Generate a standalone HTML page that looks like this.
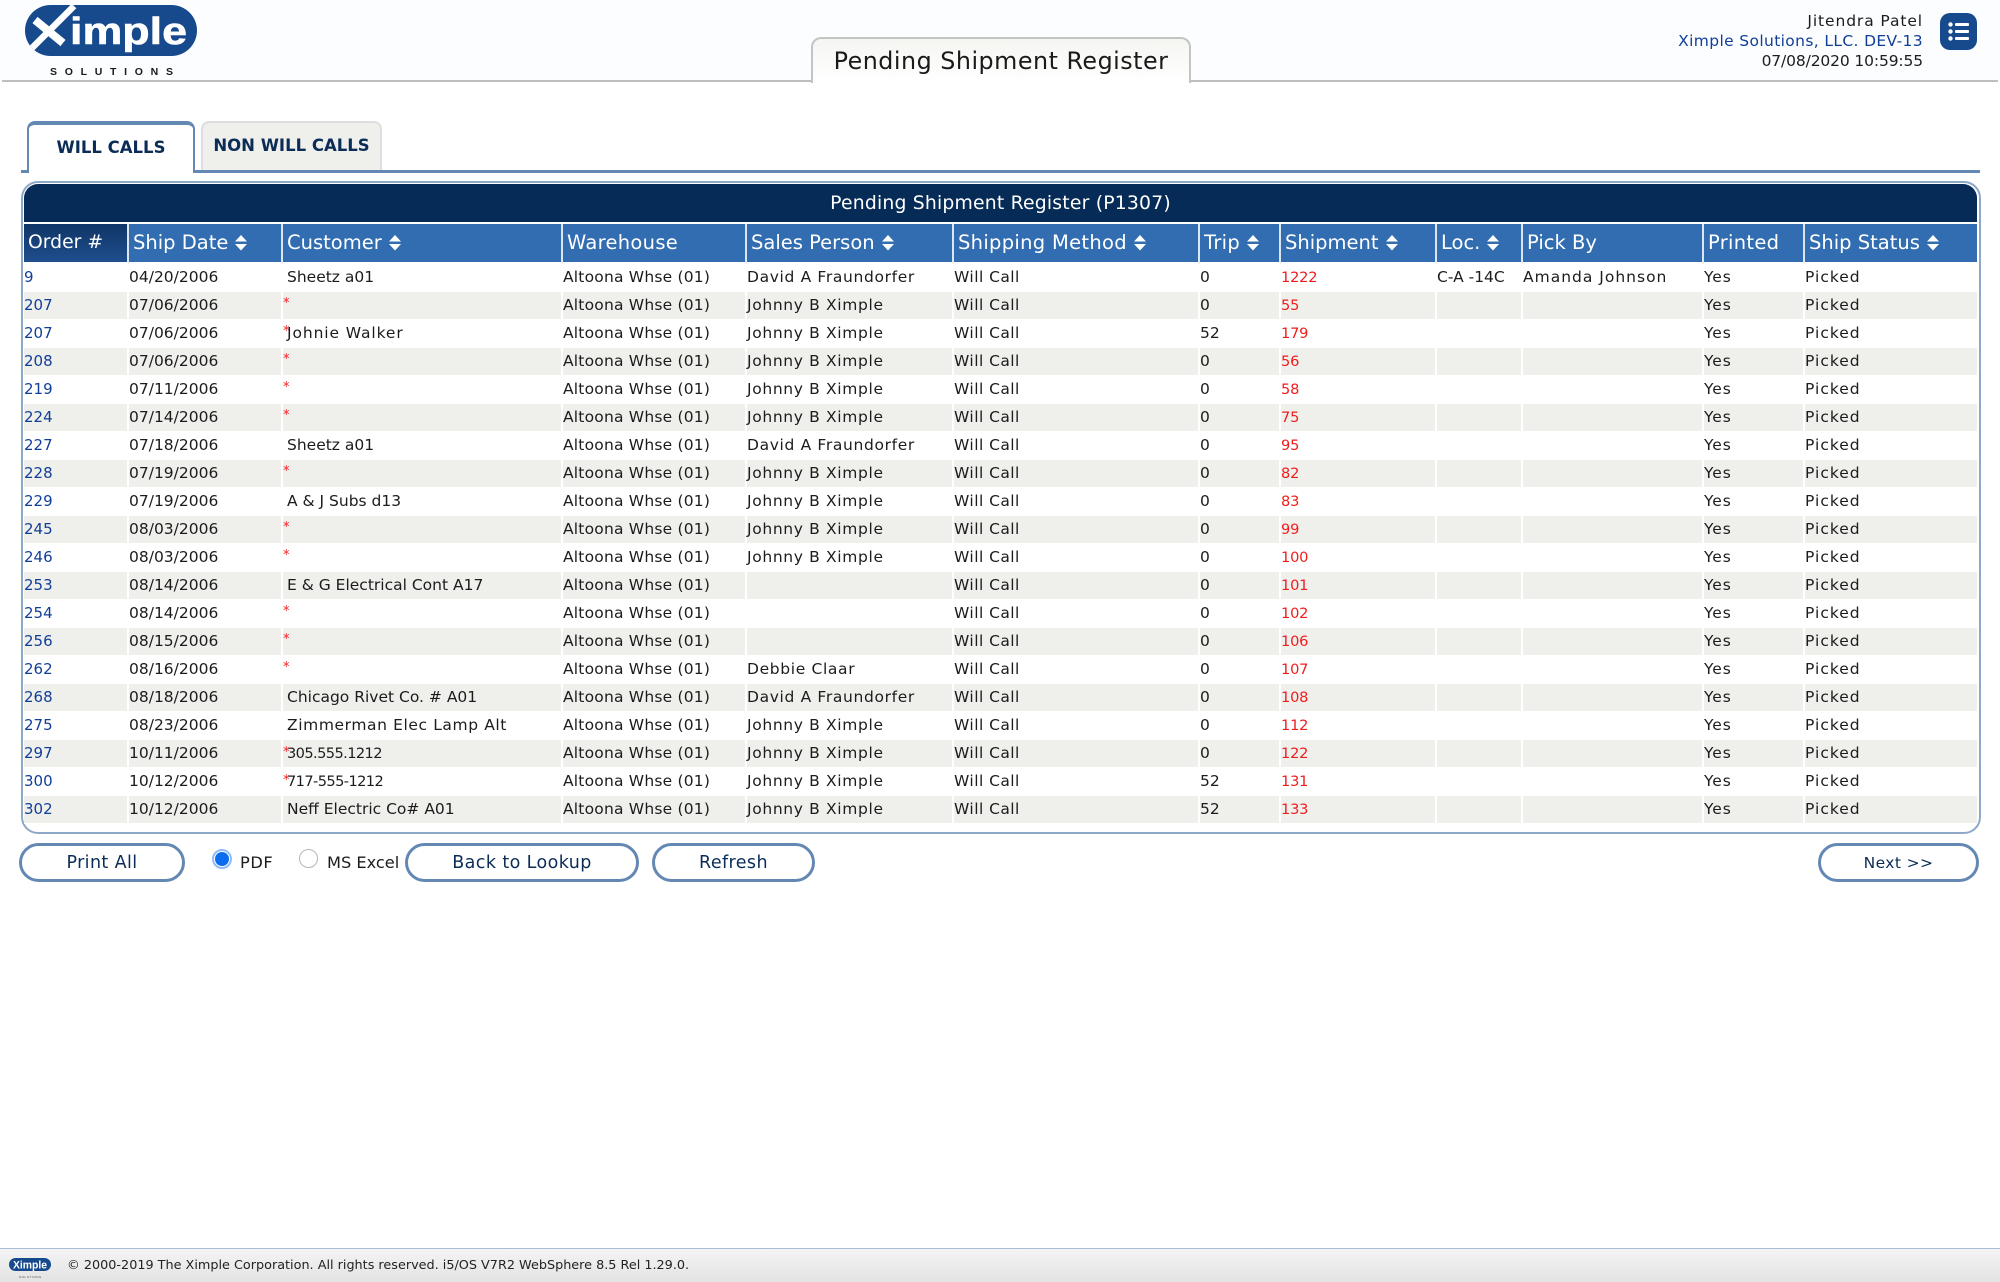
<!DOCTYPE html>
<html><head><meta charset="utf-8"><title>Pending Shipment Register</title>
<style>
*{box-sizing:border-box}
html,body{margin:0;padding:0;width:2000px;height:1282px;overflow:hidden;background:#fff;font-family:"DejaVu Sans","Liberation Sans",sans-serif;color:#1c1c1c}
.a{position:absolute;white-space:nowrap}
#hdr{left:0;top:0;width:2000px;height:81px;background:#fcfdff}
#hline{left:2px;top:80px;width:1996px;height:2px;background:#bdbdbd}
#title{left:811px;top:37px;width:380px;height:46px;border:2px solid #c4c4c4;border-bottom:none;border-radius:10px 10px 0 0;background:linear-gradient(#f5f5f2,#fff);text-align:center;font-size:23.8px;line-height:45px;letter-spacing:.5px;color:#1a1a1a}
.u{right:77px;font-size:15.5px;line-height:20px}
#menu{left:1940px;top:13px;width:37px;height:37px;border-radius:10px;background:#174a8c}
.tab{font-weight:bold;color:#0b2c57;text-align:center;font-size:16.5px}
#t1{left:27px;top:121px;width:168px;height:52px;background:#fff;border:2px solid #6488b4;border-top:4px solid #6488b4;border-bottom:none;border-radius:8px 8px 0 0;line-height:46px;z-index:3}
#t2{left:201px;top:121px;width:181px;height:49px;background:#efefec;border:2px solid #dedede;border-bottom:none;border-radius:8px 8px 0 0;line-height:46px}
#tline{left:21px;top:170px;width:1959px;height:3px;background:#6488b4}
#panel{left:21px;top:181px;width:1960px;height:653px;border:2px solid #8ea8c8;border-radius:17px}
#cap{left:24px;top:184px;width:1953px;height:38px;background:#062b56;color:#fff;text-align:center;font-size:18.8px;line-height:39px;border-radius:14px 14px 0 0;letter-spacing:.2px}
table{position:absolute;left:24px;top:224px;width:1953px;border-collapse:separate;border-spacing:0;table-layout:fixed}
th{height:40px;background:#316db0;background-clip:padding-box;color:#fff;font-weight:normal;font-size:19.5px;text-align:left;padding:0 0 0 4px;border-right:2px solid #dbe6f2;border-bottom:2px solid #fff;white-space:nowrap;overflow:hidden;line-height:36px}
th:last-child,td:last-child{border-right:none}
th.on{background:linear-gradient(#0f3566,#204e8e);font-size:18.8px}
th.w{letter-spacing:.3px}
th svg{margin-left:7px;vertical-align:-2px}
td{height:28px;padding:0;font-size:15.5px;border-right:2px solid #fff;border-bottom:1px solid #fff;white-space:nowrap;overflow:visible;line-height:26px;color:#1c1c1c;vertical-align:baseline}
tr:nth-child(even) td{background:#efefec}
td:first-child{color:#113f97;font-size:15px}
td:nth-child(4){letter-spacing:.2px}
td:nth-child(5){letter-spacing:.65px}
td:nth-child(6){letter-spacing:.45px}
td:nth-child(10){letter-spacing:1px}
td:nth-child(11){letter-spacing:.9px}
td:nth-child(12){letter-spacing:1px}
td.s{color:#f01c1c;font-size:14.6px;letter-spacing:-.2px}
i{font-style:normal;display:inline-block;width:4px;color:#f01c1c;vertical-align:top;line-height:24px;font-size:13px;letter-spacing:0}
.btn{top:843px;height:39px;border:3px solid #6488b4;border-radius:20px;background:#fff;color:#0b2c57;font-size:17.5px;letter-spacing:.4px;text-align:center;line-height:34px}
.lbl{font-size:16.2px;line-height:20px;color:#1c1c1c}
.r{border-radius:50%}
#foot{left:0;top:1248px;width:2000px;height:34px;background:linear-gradient(#f4f4f4,#e3e3e3);border-top:1px solid #a9bdd4}
</style></head><body>
<div class="a" id="hdr"></div>
<div class="a" id="hline"></div>
<svg class="a" style="left:20px;top:0" width="185" height="80" viewBox="0 0 185 80">
<rect x="5" y="5" width="172" height="51" rx="25.5" fill="#174a8c"/>
<path d="M15 20 L43 43" stroke="#fff" stroke-width="8" fill="none"/>
<path d="M12 48 L54 6" stroke="#fff" stroke-width="6.500" fill="none"/>
<text x="50" y="44" font-family="Liberation Sans, sans-serif" font-weight="bold" font-size="38" fill="#fff" stroke="#fff" stroke-width=".6" textLength="117" lengthAdjust="spacingAndGlyphs">imple</text>
<text x="30" y="75" font-family="Liberation Sans, sans-serif" font-weight="bold" font-size="10.5" fill="#1a1a1a" textLength="123">SOLUTIONS</text>
</svg>
<div class="a" id="title">Pending Shipment Register</div>
<div class="a u" style="top:11px;letter-spacing:.9px">Jitendra Patel</div>
<div class="a u" style="top:31px;color:#113f97;letter-spacing:.36px">Ximple Solutions, LLC. DEV-13</div>
<div class="a u" style="top:51px;letter-spacing:-.13px">07/08/2020 10:59:55</div>
<div class="a" id="menu"><svg width="37" height="37" viewBox="0 0 37 37"><circle cx="10.500" cy="11.500" r="2.200" fill="#fff"/><circle cx="10.500" cy="18.500" r="2.200" fill="#fff"/><circle cx="10.500" cy="25.500" r="2.200" fill="#fff"/><rect x="15" y="10" width="14" height="3" rx="1" fill="#fff"/><rect x="15" y="17" width="14" height="3" rx="1" fill="#fff"/><rect x="15" y="24" width="14" height="3" rx="1" fill="#fff"/></svg></div>

<div class="a" id="tline"></div>
<div class="a tab" id="t1">WILL CALLS</div>
<div class="a tab" id="t2">NON WILL CALLS</div>

<div class="a" id="panel"></div>
<div class="a" id="cap">Pending Shipment Register (P1307)</div>

<svg width="0" height="0" style="position:absolute"><defs><g id="srt"><path d="M6 0 L12 6.500 L0 6.500 Z M0 9 L12 9 L6 15.500 Z" fill="#fff"/></g></defs></svg>
<table>
<colgroup><col style="width:105px"><col style="width:154px"><col style="width:280px"><col style="width:184px"><col style="width:207px"><col style="width:246px"><col style="width:81px"><col style="width:156px"><col style="width:86px"><col style="width:181px"><col style="width:101px"><col style="width:172px"></colgroup>
<thead><tr>
<th class="on">Order #</th>
<th>Ship Date<svg width="12" height="16"><use href="#srt"/></svg></th>
<th>Customer<svg width="12" height="16"><use href="#srt"/></svg></th>
<th class="w">Warehouse</th>
<th>Sales Person<svg width="12" height="16"><use href="#srt"/></svg></th>
<th class="w">Shipping Method<svg width="12" height="16"><use href="#srt"/></svg></th>
<th class="w">Trip<svg width="12" height="16"><use href="#srt"/></svg></th>
<th>Shipment<svg width="12" height="16"><use href="#srt"/></svg></th>
<th>Loc.<svg width="12" height="16"><use href="#srt"/></svg></th>
<th>Pick By</th>
<th class="w">Printed</th>
<th>Ship Status<svg width="12" height="16"><use href="#srt"/></svg></th>
</tr></thead>
<tbody>
<tr><td>9</td><td>04/20/2006</td><td><i></i>Sheetz a01</td><td>Altoona Whse (01)</td><td>David A Fraundorfer</td><td>Will Call</td><td>0</td><td class="s">1222</td><td>C-A -14C</td><td>Amanda Johnson</td><td>Yes</td><td>Picked</td></tr>
<tr><td>207</td><td>07/06/2006</td><td><i>*</i></td><td>Altoona Whse (01)</td><td>Johnny B Ximple</td><td>Will Call</td><td>0</td><td class="s">55</td><td></td><td></td><td>Yes</td><td>Picked</td></tr>
<tr><td>207</td><td>07/06/2006</td><td style="letter-spacing:.9px"><i>*</i>Johnie Walker</td><td>Altoona Whse (01)</td><td>Johnny B Ximple</td><td>Will Call</td><td>52</td><td class="s">179</td><td></td><td></td><td>Yes</td><td>Picked</td></tr>
<tr><td>208</td><td>07/06/2006</td><td><i>*</i></td><td>Altoona Whse (01)</td><td>Johnny B Ximple</td><td>Will Call</td><td>0</td><td class="s">56</td><td></td><td></td><td>Yes</td><td>Picked</td></tr>
<tr><td>219</td><td>07/11/2006</td><td><i>*</i></td><td>Altoona Whse (01)</td><td>Johnny B Ximple</td><td>Will Call</td><td>0</td><td class="s">58</td><td></td><td></td><td>Yes</td><td>Picked</td></tr>
<tr><td>224</td><td>07/14/2006</td><td><i>*</i></td><td>Altoona Whse (01)</td><td>Johnny B Ximple</td><td>Will Call</td><td>0</td><td class="s">75</td><td></td><td></td><td>Yes</td><td>Picked</td></tr>
<tr><td>227</td><td>07/18/2006</td><td><i></i>Sheetz a01</td><td>Altoona Whse (01)</td><td>David A Fraundorfer</td><td>Will Call</td><td>0</td><td class="s">95</td><td></td><td></td><td>Yes</td><td>Picked</td></tr>
<tr><td>228</td><td>07/19/2006</td><td><i>*</i></td><td>Altoona Whse (01)</td><td>Johnny B Ximple</td><td>Will Call</td><td>0</td><td class="s">82</td><td></td><td></td><td>Yes</td><td>Picked</td></tr>
<tr><td>229</td><td>07/19/2006</td><td><i></i>A &amp; J Subs d13</td><td>Altoona Whse (01)</td><td>Johnny B Ximple</td><td>Will Call</td><td>0</td><td class="s">83</td><td></td><td></td><td>Yes</td><td>Picked</td></tr>
<tr><td>245</td><td>08/03/2006</td><td><i>*</i></td><td>Altoona Whse (01)</td><td>Johnny B Ximple</td><td>Will Call</td><td>0</td><td class="s">99</td><td></td><td></td><td>Yes</td><td>Picked</td></tr>
<tr><td>246</td><td>08/03/2006</td><td><i>*</i></td><td>Altoona Whse (01)</td><td>Johnny B Ximple</td><td>Will Call</td><td>0</td><td class="s">100</td><td></td><td></td><td>Yes</td><td>Picked</td></tr>
<tr><td>253</td><td>08/14/2006</td><td><i></i>E &amp; G Electrical Cont A17</td><td>Altoona Whse (01)</td><td></td><td>Will Call</td><td>0</td><td class="s">101</td><td></td><td></td><td>Yes</td><td>Picked</td></tr>
<tr><td>254</td><td>08/14/2006</td><td><i>*</i></td><td>Altoona Whse (01)</td><td></td><td>Will Call</td><td>0</td><td class="s">102</td><td></td><td></td><td>Yes</td><td>Picked</td></tr>
<tr><td>256</td><td>08/15/2006</td><td><i>*</i></td><td>Altoona Whse (01)</td><td></td><td>Will Call</td><td>0</td><td class="s">106</td><td></td><td></td><td>Yes</td><td>Picked</td></tr>
<tr><td>262</td><td>08/16/2006</td><td><i>*</i></td><td>Altoona Whse (01)</td><td>Debbie Claar</td><td>Will Call</td><td>0</td><td class="s">107</td><td></td><td></td><td>Yes</td><td>Picked</td></tr>
<tr><td>268</td><td>08/18/2006</td><td><i></i>Chicago Rivet Co. # A01</td><td>Altoona Whse (01)</td><td>David A Fraundorfer</td><td>Will Call</td><td>0</td><td class="s">108</td><td></td><td></td><td>Yes</td><td>Picked</td></tr>
<tr><td>275</td><td>08/23/2006</td><td style="letter-spacing:.6px"><i></i>Zimmerman Elec Lamp Alt</td><td>Altoona Whse (01)</td><td>Johnny B Ximple</td><td>Will Call</td><td>0</td><td class="s">112</td><td></td><td></td><td>Yes</td><td>Picked</td></tr>
<tr><td>297</td><td>10/11/2006</td><td style="font-size:14.6px;letter-spacing:-.6px"><i>*</i>305.555.1212</td><td>Altoona Whse (01)</td><td>Johnny B Ximple</td><td>Will Call</td><td>0</td><td class="s">122</td><td></td><td></td><td>Yes</td><td>Picked</td></tr>
<tr><td>300</td><td>10/12/2006</td><td style="font-size:14.6px;letter-spacing:-.6px"><i>*</i>717-555-1212</td><td>Altoona Whse (01)</td><td>Johnny B Ximple</td><td>Will Call</td><td>52</td><td class="s">131</td><td></td><td></td><td>Yes</td><td>Picked</td></tr>
<tr><td>302</td><td>10/12/2006</td><td><i></i>Neff Electric Co# A01</td><td>Altoona Whse (01)</td><td>Johnny B Ximple</td><td>Will Call</td><td>52</td><td class="s">133</td><td></td><td></td><td>Yes</td><td>Picked</td></tr>
</tbody></table>

<div class="a btn" style="left:19px;width:166px">Print All</div>
<div class="a r" style="left:212px;top:849px;width:20px;height:20px;border:2px solid #8fbdf5;background:#fff"></div>
<div class="a r" style="left:215px;top:852px;width:14px;height:14px;background:#0b6cf0"></div>
<div class="a lbl" style="left:240px;top:853px;letter-spacing:.6px">PDF</div>
<div class="a r" style="left:299px;top:849px;width:19px;height:19px;border:1.500px solid #b5b5b5;background:#fff"></div>
<div class="a lbl" style="left:327px;top:853px">MS Excel</div>
<div class="a btn" style="left:405px;width:234px">Back to Lookup</div>
<div class="a btn" style="left:652px;width:163px">Refresh</div>
<div class="a btn" style="left:1818px;width:161px;font-size:15.5px">Next &gt;&gt;</div>

<div class="a" id="foot"></div>
<svg class="a" style="left:8px;top:1256px" width="46" height="24" viewBox="0 0 46 24">
<rect x="1" y="2" width="42" height="13" rx="6.500" fill="#174a8c"/>
<text x="5" y="12.500" font-family="Liberation Sans, sans-serif" font-weight="bold" font-size="11" fill="#fff" textLength="34" lengthAdjust="spacingAndGlyphs">Ximple</text>
<text x="11" y="22" font-family="Liberation Sans, sans-serif" font-size="3" fill="#444" textLength="22">SOLUTIONS</text>
</svg>
<div class="a" style="left:67px;top:1257px;font-size:12.8px;line-height:18px;color:#222">© 2000-2019 The Ximple Corporation. All rights reserved. i5/OS V7R2 WebSphere 8.5 Rel 1.29.0.</div>
</body></html>
